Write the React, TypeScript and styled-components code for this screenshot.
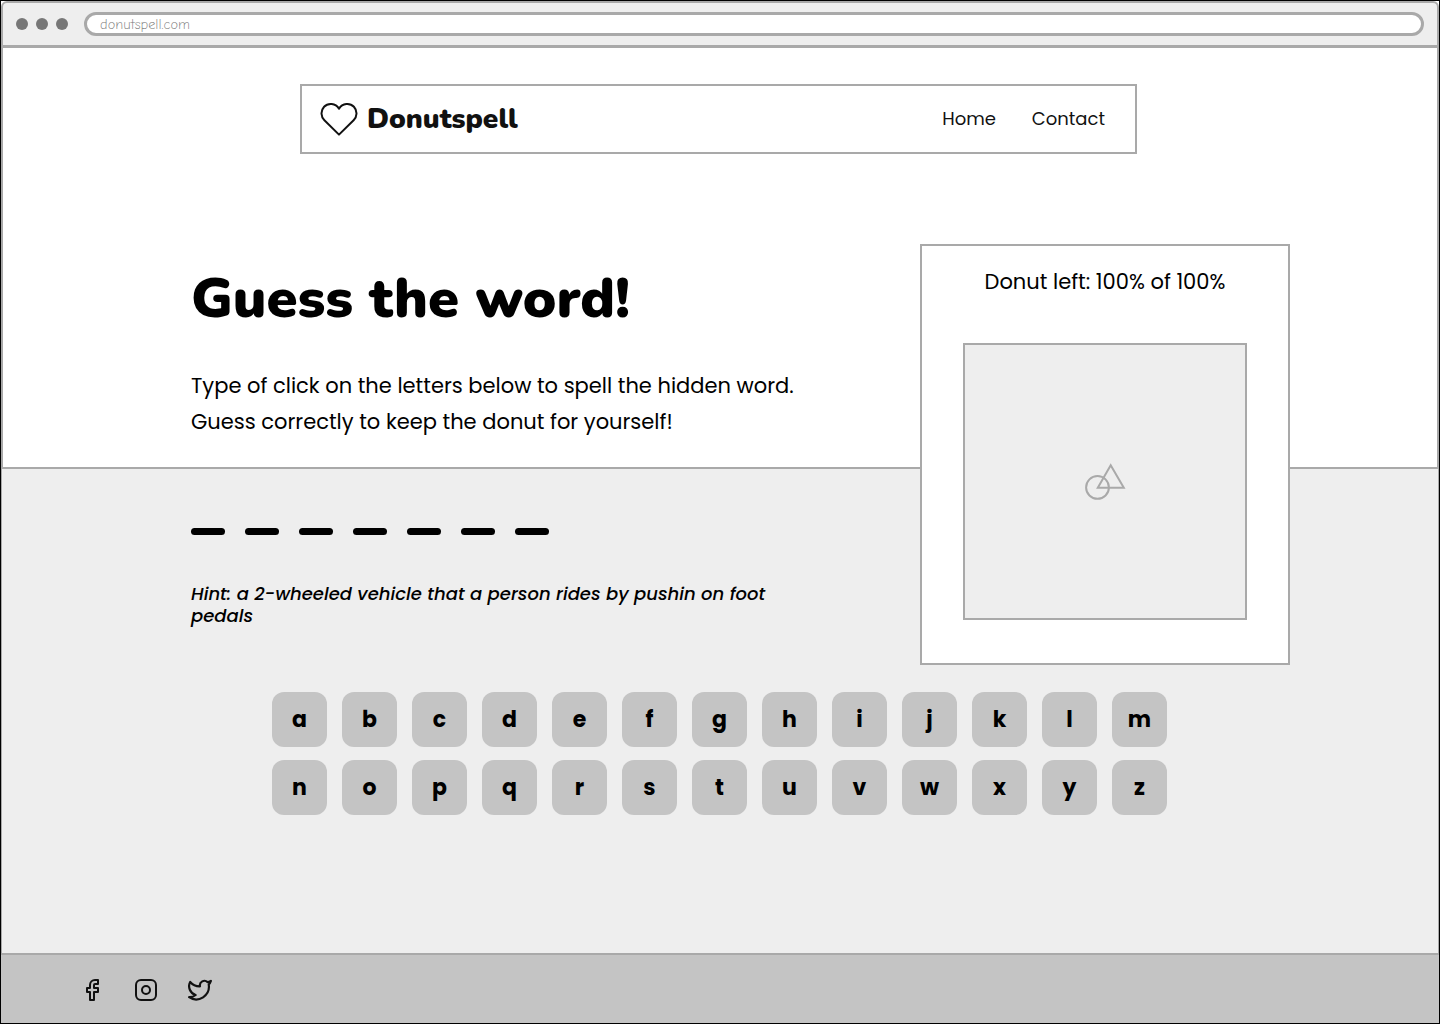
import React from "react";
import styled, { createGlobalStyle } from "styled-components";

const line = "#a9a9a9";
const surface = "#eeeeee";
const fill = "#c4c4c4";
const body = `Poppins, Inter, "Open Sans", sans-serif`;
const display = `Nunito, Lato, "Open Sans", sans-serif`;

const GlobalStyle = createGlobalStyle`
  *, *::before, *::after { box-sizing: border-box; }
  body { margin: 0; background: #fff; color: #000; font-family: ${body}; }
  h1, p, ul { margin: 0; padding: 0; }
`;

const Page = styled.div`
  display: flex;
  flex-direction: column;
  min-height: 100vh;
  border: 1px solid #000;
`;

const BrowserBar = styled.div`
  display: flex;
  align-items: center;
  gap: 16px;
  padding: 9px 13px;
  background: ${surface};
  border: 2px solid ${line};
  border-bottom-width: 3px;
  border-radius: 6px 6px 0 0;
`;

const Dots = styled.div`
  display: flex;
  gap: 8px;
`;

const Dot = styled.span`
  width: 12px;
  height: 12px;
  border-radius: 50%;
  background: #777;
`;

const Address = styled.input`
  flex: 1;
  min-width: 0;
  height: 24px;
  padding: 0 13px;
  border: 3px solid ${line};
  border-radius: 12px;
  background: #fff;
  color: #777;
  font: 300 14px "Comic Neue", ${display};
  outline: none;
`;

const Hero = styled.header`
  padding: 36px 3px 0 0;
  border: 2px solid ${line};
  border-top: 0;
`;

const NavBar = styled.nav`
  display: flex;
  align-items: center;
  justify-content: space-between;
  max-width: 837px;
  height: 70px;
  margin: 0 auto 90px;
  padding: 0 30px 0 18px;
  border: 2px solid ${line};
`;

const Brand = styled.a`
  display: flex;
  align-items: center;
  gap: 9px;
  color: #111;
  font: 900 28px/36px ${display};
  text-decoration: none;
`;

const NavLinks = styled.div`
  display: flex;
  gap: 36px;
`;

const NavLink = styled.a`
  color: #111;
  font-size: 18px;
  line-height: 36px;
  text-decoration: none;
`;

const HeroContent = styled.div`
  display: flex;
  align-items: flex-start;
  justify-content: space-between;
  gap: 36px;
  padding: 0 144px 0 188px;
`;

const Intro = styled.div`
  padding-top: 23px;
`;

const Title = styled.h1`
  margin-bottom: 37px;
  font: 900 56px/64px ${display};
`;

const Lead = styled.p`
  font-size: 21px;
  line-height: 36px;
`;

const Card = styled.aside`
  position: relative;
  z-index: 1;
  flex: none;
  width: 370px;
  margin-bottom: -198px;
  padding: 18px 41px 43px;
  background: #fff;
  border: 2px solid ${line};
`;

const CardText = styled.p`
  margin-bottom: 43px;
  font-size: 21px;
  line-height: 36px;
  text-align: center;
`;

const Placeholder = styled.div`
  display: grid;
  place-items: center;
  height: 277px;
  background: ${surface};
  border: 2px solid ${line};
`;

const Game = styled.main`
  flex: 1;
  padding: 59px 1px 48px 0;
  background: ${surface};
  border: 1px solid ${line};
  border-width: 0 1px;
`;

const Clue = styled.section`
  padding-left: 189px;
`;

const Blanks = styled.ul`
  display: flex;
  gap: 20px;
  margin-bottom: 48px;
  list-style: none;
`;

const Blank = styled.li`
  width: 34px;
  height: 7px;
  border-radius: 4px;
  background: #000;
`;

const Hint = styled.p`
  max-width: 600px;
  font-size: 18px;
  font-style: italic;
  font-weight: 500;
  line-height: 22px;
`;

const Keyboard = styled.div`
  display: grid;
  grid-template-columns: repeat(13, 55px);
  justify-content: center;
  gap: 13px 15px;
  margin-top: 65px;
`;

const Key = styled.button`
  height: 55px;
  padding: 0;
  border: 0;
  border-radius: 12px;
  background: ${fill};
  color: #000;
  font: 700 22px ${body};
  cursor: pointer;
`;

const Footer = styled.footer`
  display: flex;
  gap: 30px;
  padding: 23px 79px 21px;
  background: ${fill};
  border-top: 2px solid ${line};
`;

const SocialLink = styled.a`
  display: block;
  height: 24px;
  color: #111;
`;

const Drawing = styled.svg`
  display: block;
  fill: none;
  stroke: currentColor;
  stroke-width: 2;
  stroke-linecap: round;
  stroke-linejoin: round;
`;

const ShapesDrawing = styled(Drawing)`
  color: ${line};
  stroke-linejoin: miter;
`;

const letters = "abcdefghijklmnopqrstuvwxyz".split("");
const wordLength = 7;

export default function App() {
  return (
    <>
      <GlobalStyle />
      <Page>
        <BrowserBar>
          <Dots>
            <Dot />
            <Dot />
            <Dot />
          </Dots>
          <Address aria-label="Address" defaultValue="donutspell.com" />
        </BrowserBar>

        <Hero>
          <NavBar>
            <Brand href="#home">
              <Drawing width="38" height="34" viewBox="0 0 38 34" aria-hidden="true">
                <path d="M19 6.7C15.5 1 8 .6 4.1 4.8C.4 8.8.8 14.8 4.4 18.2L19 32.6L33.6 18.2C37.2 14.8 37.6 8.8 33.9 4.8C30 .6 22.5 1 19 6.7Z" />
              </Drawing>
              Donutspell
            </Brand>
            <NavLinks>
              <NavLink href="#home">Home</NavLink>
              <NavLink href="#contact">Contact</NavLink>
            </NavLinks>
          </NavBar>

          <HeroContent>
            <Intro>
              <Title>Guess the word!</Title>
              <Lead>
                Type of click on the letters below to spell the hidden word.
                <br />
                Guess correctly to keep the donut for yourself!
              </Lead>
            </Intro>
            <Card>
              <CardText>Donut left: 100% of 100%</CardText>
              <Placeholder>
                <ShapesDrawing width="42" height="38" viewBox="0 0 42 38" aria-hidden="true">
                  <circle cx="13.5" cy="24.4" r="11.4" />
                  <path d="M26.7 2.2L13.8 24.8H39.8Z" />
                </ShapesDrawing>
              </Placeholder>
            </Card>
          </HeroContent>
        </Hero>

        <Game>
          <Clue>
            <Blanks aria-label="Hidden word">
              {Array.from({ length: wordLength }, (_, i) => (
                <Blank key={i} />
              ))}
            </Blanks>
            <Hint>Hint: a 2-wheeled vehicle that a person rides by pushin on foot pedals</Hint>
          </Clue>
          <Keyboard>
            {letters.map((letter) => (
              <Key key={letter} type="button">
                {letter}
              </Key>
            ))}
          </Keyboard>
        </Game>

        <Footer>
          <SocialLink href="#facebook" aria-label="Facebook">
            <Drawing width="24" height="24" viewBox="0 0 24 24">
              <path d="M18 2h-3a5 5 0 0 0-5 5v3H7v4h3v8h4v-8h4v-4h-4V7a1 1 0 0 1 1-1h3V2z" />
            </Drawing>
          </SocialLink>
          <SocialLink href="#instagram" aria-label="Instagram">
            <Drawing width="24" height="24" viewBox="0 0 24 24">
              <rect x="2" y="2" width="20" height="20" rx="5" />
              <circle cx="12" cy="12" r="4" />
            </Drawing>
          </SocialLink>
          <SocialLink href="#twitter" aria-label="Twitter">
            <Drawing width="24" height="24" viewBox="1 1.4 22 22">
              <path d="M22 4s-.7 2.1-2 3.4c1.6 10-9.4 17.3-18 11.6 2.2.1 4.4-.6 6-2C3 15.5.5 9.6 3 5c2.2 2.6 5.6 4.1 9 4-.9-4.2 4-6.6 7-3.8 1.1 0 3-1.2 3-1.2z" />
            </Drawing>
          </SocialLink>
        </Footer>
      </Page>
    </>
  );
}
